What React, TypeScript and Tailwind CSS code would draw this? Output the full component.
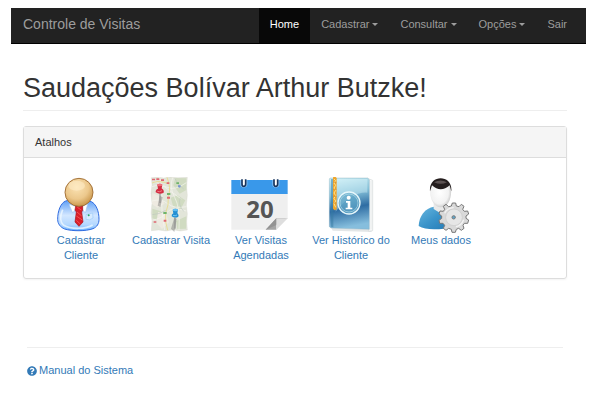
import { FaQuestionCircle } from 'react-icons/fa'

const MENU = [
  { label: 'Cadastrar', dropdown: true },
  { label: 'Consultar', dropdown: true },
  { label: 'Opções',    dropdown: true },
  { label: 'Sair',      dropdown: false },
]

const ATALHOS = [
  { label: 'Cadastrar Cliente',        Icon: IconeCliente },
  { label: 'Cadastrar Visita',         Icon: IconeMapa },
  { label: 'Ver Visitas Agendadas',    Icon: IconeAgenda },
  { label: 'Ver Histórico do Cliente', Icon: IconeHistorico },
  { label: 'Meus dados',               Icon: IconeDados },
]

function IconeCliente() {
  return (
    <svg viewBox="3 21 180 168" className="w-[60px] h-14" aria-hidden="true">
      <defs>
        <linearGradient id="cli-corpo" x1="0" y1="0" x2="0" y2="1">
          <stop offset="0" stopColor="#5b9df5" />
          <stop offset="0.5" stopColor="#d3e7ff" />
          <stop offset="0.8" stopColor="#b4d8ff" />
          <stop offset="1" stopColor="#6cb4ff" />
        </linearGradient>
        <radialGradient id="cli-rosto" cx="0.42" cy="0.32" r="0.7">
          <stop offset="0" stopColor="#fbe3b4" />
          <stop offset="0.6" stopColor="#ecc88c" />
          <stop offset="1" stopColor="#c99549" />
        </radialGradient>
      </defs>
      <path d="M47 93C32 99 23 123 23 148C23 161 31 172 44 177C66 184 108 184 129 176C141 171 147 161 147 148C147 123 138 102 124 95C110 89 62 88 47 93Z" fill="url(#cli-corpo)" stroke="#2f6be0" strokeWidth="3" />
      <path d="M38 119C30 139 30 157 41 166C61 178 108 178 128 165" fill="none" stroke="#edf7ff" strokeWidth="5" opacity="0.8" />
      <path d="M65 105L82 111L68 129L57 103ZM92 111L113 102L106 129Z" fill="#fff" stroke="#a9c8ef" strokeWidth="2" />
      <path d="M77 108H98L98 121L95 126L99 156L87 169L75 156L79 126L75 120Z" fill="#d91e2a" stroke="#a4121c" strokeWidth="2" />
      <path d="M81 126L95 138M79 138L97 150M79 151L91 162M82 112L94 120" stroke="#ff6a65" strokeWidth="2" />
      <path d="M108 134L128 129L129 144Q119 153 108 148Z" fill="#d7ebff" stroke="#9ccaf7" strokeWidth="2" />
      <circle cx="116" cy="136" r="3" fill="#28a667" />
      <circle cx="87" cy="67" r="42" fill="url(#cli-rosto)" stroke="#a5733a" strokeWidth="3" />
      <ellipse cx="80" cy="47" rx="25" ry="15" fill="#fff0ce" opacity="0.5" />
    </svg>
  )
}

function IconeMapa() {
  return (
    <svg viewBox="48 21 180 168" className="w-[60px] h-14" aria-hidden="true">
      <path d="M79 23L97 21L116 24L136 21L159 23L187 22L185 52L187 76L184 105L187 132L185 155L187 180L165 183L145 179L123 183L101 180L79 182L81 153L78 129L81 100L78 70L81 45Z" fill="#e2e5d9" stroke="#d3d5cb" />
      <path d="M151 24L184 25V60L164 71L145 46ZM137 83L158 76L181 91L166 119L144 108ZM82 116L108 124L101 151L82 145ZM153 153L184 139L183 176L157 177Z" fill="#d0dbc1" />
      <path d="M82 69L105 79L119 101L97 113L81 102ZM99 126L124 133L132 157L111 177L94 159Z" fill="#eeeae1" />
      <path d="M81 50Q105 41 127 52T184 38M81 93Q109 85 128 101T185 110M82 151Q112 145 126 127T184 123M103 22Q115 47 111 78T119 180M143 23Q132 52 149 82T162 180M82 29L119 51L169 87" fill="none" stroke="#f6f6f0" strokeWidth="2" />
      <path d="M126 22Q139 54 130 80Q132 105 122 129Q119 155 128 181M81 39Q99 30 128 40" fill="none" stroke="#e8dc96" strokeWidth="3" />
      <path d="M149 25Q157 43 176 57M82 134Q106 133 122 121M166 83Q158 104 176 124" fill="none" stroke="#c0c9c0" strokeWidth="2" />
      <path d="M81 26H90V31H81ZM94 25H103V30H94ZM108 28H117V33H108ZM125 37H133V42H125ZM126 80H135V86H126ZM116 149H124V155H116ZM86 154H94V158H86Z" fill="#e06772" />
      <path d="M126 69H136V75H126ZM115 126H125V132H115ZM154 37H162V42H154Z" fill="#6fb46b" />
      <path d="M160 44L168 47L165 53L159 51Z" fill="#7894d1" />
      <path d="M104 77L98 107L106 111L113 82ZM148 143L138 176L148 186L155 147Z" fill="#777" opacity="0.45" />
      <path d="M105 70V99M150 142V176" stroke="#888" strokeWidth="3" />
      <path d="M97 44Q104 39 112 44L110 55Q118 60 116 68Q104 75 92 67Q91 59 99 56Z" fill="#d32d42" />
      <ellipse cx="104" cy="45" rx="8" ry="4" fill="#f0717c" />
      <path d="M97 64Q104 67 111 62" fill="none" stroke="#f17a85" strokeWidth="3" />
      <path d="M143 119Q151 113 159 119L157 129Q163 135 160 140Q150 146 140 139Q139 133 145 130Z" fill="#248fd3" />
      <ellipse cx="151" cy="120" rx="8" ry="4" fill="#62bdf0" />
      <path d="M144 136Q151 139 156 135" fill="none" stroke="#73c8f5" strokeWidth="3" />
    </svg>
  )
}

function IconeAgenda() {
  return (
    <svg viewBox="18 21 180 168" className="w-[60px] h-14" aria-hidden="true">
      <path d="M19 70H188V145L154 179H19Z" fill="#efefef" />
      <path d="M19 30H188V72H19Z" fill="#3998ea" />
      <path d="M46 30H67V43Q67 53 56 53Q46 53 46 43ZM142 30H163V43Q163 53 152 53Q142 53 142 43Z" fill="#8cc4f5" />
      <path d="M51 28V42Q51 49 56 49Q62 49 62 42V28M147 28V42Q147 49 152 49Q158 49 158 42V28" fill="#fff" stroke="#17355f" strokeWidth="5" />
      <path d="M122 179L154 145V179Z" fill="#a4a4a4" />
      <path d="M122 179L154 145H188Q166 150 154 165Z" fill="#929292" />
      <path d="M154 145H188L154 179Z" fill="#dedede" />
      <text x="105" y="143" textAnchor="middle" fontSize="72" fontWeight="700" fill="#555" className="font-['Open_Sans',sans-serif]">20</text>
    </svg>
  )
}

function IconeHistorico() {
  return (
    <svg viewBox="48 21 180 168" className="w-[60px] h-14" aria-hidden="true">
      <defs>
        <linearGradient id="his-capa" x1="0" y1="0" x2="0.15" y2="1">
          <stop offset="0" stopColor="#cdeef5" />
          <stop offset="0.35" stopColor="#85c1d9" />
          <stop offset="0.65" stopColor="#2f6da3" />
          <stop offset="1" stopColor="#86bedd" />
        </linearGradient>
      </defs>
      <path d="M79 174L195 178L201 186L83 182Z" fill="#e3e6e7" />
      <path d="M187 25L203 31V182L191 184Z" fill="#f8f9f9" stroke="#d5d9da" strokeWidth="2" />
      <path d="M198 33V178" stroke="#e2e5e6" strokeWidth="2" />
      <path d="M75 24H188L193 29V178L78 174L73 170V27Z" fill="url(#his-capa)" stroke="#7ba3b3" strokeWidth="1" />
      <path d="M78 27H85V172L78 170Z" fill="#367aa1" opacity="0.5" />
      <path d="M92 27H187V68Q139 65 92 125Z" fill="#e8fbff" opacity="0.35" />
      <circle cx="132" cy="99" r="33" fill="#62a9ca" fillOpacity="0.7" stroke="#e7f7fb" strokeWidth="4" />
      <circle cx="132" cy="99" r="27" fill="none" stroke="#b5dce8" strokeWidth="2" />
      <circle cx="131" cy="83" r="6" fill="#fff" />
      <path d="M123 93H136V113H142V118H122V113H128V98H123Z" fill="#fff" />
      <path d="M84 22Q91 17 95 25V118L89 121L84 116Z" fill="#efa52c" />
      <path d="M87 27L92 32L87 39L92 46L87 54L92 61L87 69L92 77L87 85L92 93L87 101L92 112" fill="none" stroke="#ffe08a" strokeWidth="3" />
      <path d="M85 37H94M85 58H94M85 79H94M85 99H94" stroke="#d18a2c" strokeWidth="2" />
    </svg>
  )
}

function IconeDados() {
  return (
    <svg viewBox="18 21 180 168" className="w-[60px] h-14" aria-hidden="true">
      <defs>
        <linearGradient id="dad-corpo" x1="0" y1="0" x2="1" y2="1">
          <stop offset="0" stopColor="#69b7df" />
          <stop offset="0.5" stopColor="#3b94ca" />
          <stop offset="1" stopColor="#2278b3" />
        </linearGradient>
        <radialGradient id="dad-rosto" cx="0.45" cy="0.45" r="0.65">
          <stop offset="0" stopColor="#fff" />
          <stop offset="0.65" stopColor="#f2f2f2" />
          <stop offset="1" stopColor="#b3b3b3" />
        </radialGradient>
      </defs>
      <path d="M87 110C60 114 42 138 41 168Q58 178 87 178Q119 178 139 171V135Q130 118 109 113Z" fill="url(#dad-corpo)" />
      <path d="M86 88H126V118L109 131L86 117Z" fill="#e9e9e9" />
      <path d="M76 57C76 20 138 20 138 57C141 86 128 112 107 112C87 112 73 86 76 57Z" fill="url(#dad-rosto)" />
      <path d="M75 64C70 12 144 12 139 64L134 46Q121 58 107 58Q94 58 81 46Z" fill="#241d1d" />
      <path d="M87 37Q106 26 126 37Q107 46 87 37Z" fill="#807575" opacity="0.6" />
      <path d="M142 99H152L154 108L162 110L169 103L177 109L173 118L178 124L188 123L191 132L183 138L183 145L191 150L188 160L178 160L174 166L177 175L169 181L161 175L154 178L151 187H141L139 178L131 175L123 181L115 175L119 166L114 160L104 160L102 151L110 145L110 138L102 132L105 123L115 124L119 118L115 109L123 103L131 110L139 108Z" fill="#d9d9d9" stroke="#777" strokeWidth="3" />
      <circle cx="147" cy="142" r="25" fill="#e6e6e6" stroke="#c8c8c8" strokeWidth="2" />
      <circle cx="146" cy="142" r="5" fill="#5fa7cc" stroke="#777" strokeWidth="3" />
      <path d="M119 130Q126 114 146 113M153 170Q170 166 176 149" fill="none" stroke="#f3f3f3" strokeWidth="4" />
    </svg>
  )
}

function Navbar() {
  return (
    <nav className="ml-[11px] mr-[14px] flex h-9 items-stretch justify-between border-b border-black bg-[#222] pl-3 pr-2 text-[#9d9d9d]">
      <a href="#" className="flex items-center pb-1 text-[14px] leading-5">Controle de Visitas</a>
      <div className="flex">
        <a href="#" className="flex items-center bg-[#080808] px-[11px] pb-0.5 text-white">Home</a>
        {MENU.map(({ label, dropdown }) =>
          dropdown ? (
            <button key={label} type="button" aria-haspopup="menu" className="flex items-center gap-[3px] px-[11px] pb-0.5">
              {label}
              <span className="border-x-[3px] border-t-[3px] border-x-transparent border-t-current" />
            </button>
          ) : (
            <a key={label} href="#" className="flex items-center px-[11px] pb-0.5">{label}</a>
          ),
        )}
      </div>
    </nav>
  )
}

export default function App() {
  return (
    <div className="bg-white pt-2 font-['Liberation_Sans',Arial,sans-serif] text-[11px] leading-[15px] text-[#333]">
      <Navbar />

      <main className="ml-[23px] mr-[33px]">
        <h1 className="mt-[29px] border-b border-[#eee] pb-1.5 text-[27px] leading-[31px]">
          Saudações Bolívar Arthur Butzke!
        </h1>

        <section className="mt-[15px] rounded-[3px] border border-[#ddd] shadow-xs">
          <h2 className="border-b border-[#ddd] bg-[#f5f5f5] px-[11px] pb-[7px] pt-2">Atalhos</h2>
          <div className="flex flex-wrap pb-[15px] pl-3 pt-[19px]">
            {ATALHOS.map(({ label, Icon }) => (
              <a key={label} href="#" className="flex w-[90px] flex-col items-center px-1 text-center text-[#337ab7]">
                <Icon />
                <span>{label}</span>
              </a>
            ))}
          </div>
        </section>
      </main>

      <footer className="ml-[27px] mr-[37px] mt-[68px] border-t border-[#eee] pt-[15px]">
        <a href="#" className="inline-flex items-center gap-0.5 text-[#337ab7]">
          <FaQuestionCircle size={10} />
          Manual do Sistema
        </a>
      </footer>
    </div>
  )
}
